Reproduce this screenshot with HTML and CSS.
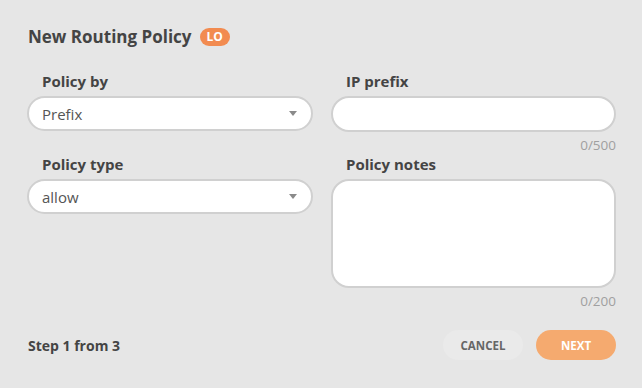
FILE: index.html
```html
<!DOCTYPE html>
<html lang="en">
<head>
    <meta charset="UTF-8">
    <meta name="viewport" content="width=device-width, initial-scale=1.0">
    <title>New Routing Policy</title>
    <link rel="stylesheet" href="styles.css">
</head>
<body>

<div class="dialog">
    <h1 class="dialog-title">New Routing Policy <span class="badge">LO</span></h1>

    <form class="policy-form">
        <div class="field">
            <label for="policyBy">Policy by</label>
            <div class="select-wrap">
                <select id="policyBy">
                    <option>Prefix</option>
                    <option>Community</option>
                </select>
                <svg class="arrow" width="8" height="5" viewBox="0 0 8 5"><path d="M0 0h8L4 5z" fill="#8a8a8a"/></svg>
            </div>
        </div>
        <div class="field">
            <label for="ipPrefix">IP prefix</label>
            <input type="text" id="ipPrefix">
            <div class="counter">0/500</div>
        </div>
        <div class="field">
            <label for="policyType">Policy type</label>
            <div class="select-wrap">
                <select id="policyType">
                    <option>allow</option>
                    <option>deny</option>
                </select>
                <svg class="arrow" width="8" height="5" viewBox="0 0 8 5"><path d="M0 0h8L4 5z" fill="#8a8a8a"/></svg>
            </div>
        </div>
        <div class="field">
            <label for="policyNotes">Policy notes</label>
            <textarea id="policyNotes"></textarea>
            <div class="counter">0/200</div>
        </div>
    </form>

    <div class="dialog-footer">
        <span class="step">Step 1 from 3</span>
        <div class="actions">
            <button type="button" class="button button-cancel">Cancel</button>
            <button type="button" class="button button-next">Next</button>
        </div>
    </div>
</div>

</body>
</html>
```

FILE: styles.css
```css
body {
    font-family: 'Open Sans', 'Liberation Sans', sans-serif;
    background-color: #e6e6e6;
    color: #444;
    margin: 0;
    padding: 0;
}
.dialog {
    padding: 25px 26px 0 27px;
}
.dialog-title {
    margin: 0 0 0 1px;
    font-size: 17px;
    line-height: 24px;
    font-weight: 700;
    color: #444;
    display: flex;
    align-items: center;
}
.badge {
    display: inline-block;
    margin-left: 8px;
    background-color: #f28b50;
    color: white;
    font-size: 12px;
    font-weight: 700;
    line-height: 18px;
    padding: 0 7px;
    border-radius: 9px;
}
.policy-form {
    display: grid;
    grid-template-columns: 286px 1fr;
    column-gap: 18px;
    row-gap: 0;
    margin-top: 22px;
}
.field {
    display: flex;
    flex-direction: column;
    align-items: stretch;
}
.field label {
    font-size: 15px;
    font-weight: 700;
    line-height: 20px;
    margin: 0 0 5px 15px;
    color: #444;
}
.select-wrap {
    position: relative;
}
.select-wrap select,
.field input,
.field textarea {
    box-sizing: border-box;
    width: 100%;
    border: 2px solid #d0d0d0;
    background-color: white;
    font-family: inherit;
    font-size: 15px;
    color: #555;
    outline: none;
    margin: 0;
}
.select-wrap select {
    appearance: none;
    -webkit-appearance: none;
    height: 35px;
    border-radius: 18px;
    padding: 0 30px 0 13px;
}
.arrow {
    position: absolute;
    right: 16px;
    top: 15px;
}
.field input {
    height: 36px;
    border-radius: 18px;
    padding: 0 13px;
}
.field textarea {
    height: 109px;
    border-radius: 18px;
    padding: 10px 13px;
    resize: none;
}
.counter {
    text-align: right;
    font-size: 13.5px;
    line-height: 18px;
    color: #a0a0a0;
    margin-top: 4px;
}
.dialog-footer {
    display: flex;
    justify-content: space-between;
    align-items: center;
    margin-top: 20px;
    padding-left: 1px;
}
.step {
    font-size: 14px;
    font-weight: 700;
    color: #444;
}
.actions {
    display: flex;
    gap: 13px;
}
.button {
    width: 80px;
    height: 30px;
    border: none;
    border-radius: 15px;
    font-family: inherit;
    font-size: 11.5px;
    font-weight: 700;
    text-transform: uppercase;
    cursor: pointer;
}
.button-cancel {
    background-color: #eaeaea;
    color: #666;
}
.button-next {
    background-color: #f5aa6f;
    color: white;
}
```
